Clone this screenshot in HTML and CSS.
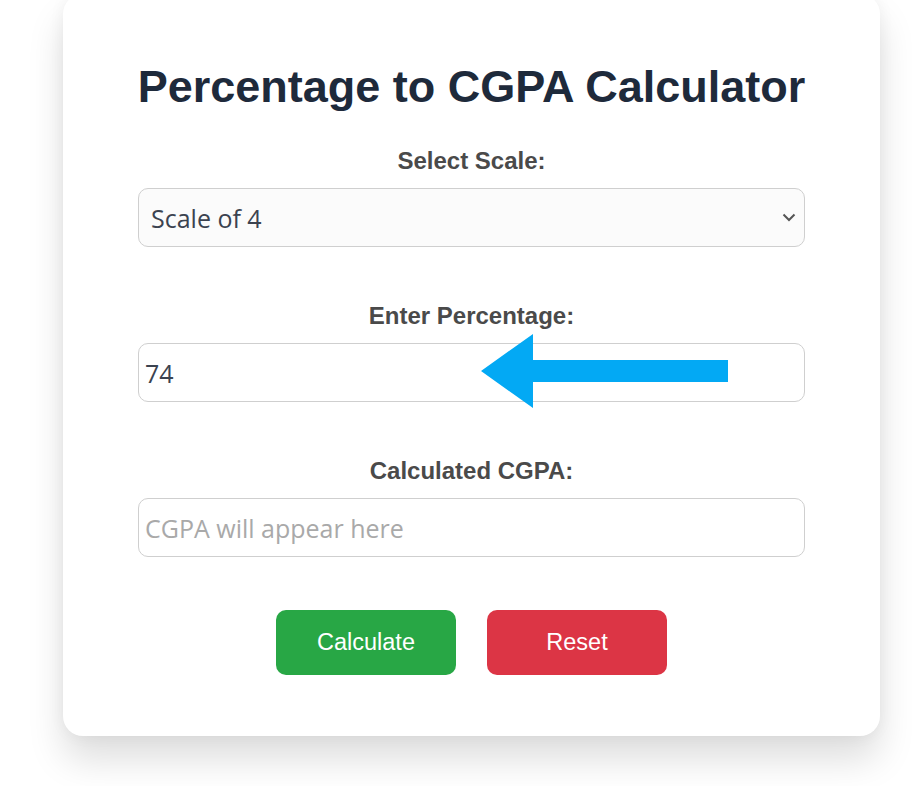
FILE: index.html
```html
<!DOCTYPE html>
<html lang="en">
<head>
    <meta charset="UTF-8">
    <meta name="viewport" content="width=device-width, initial-scale=1.0">
    <title>Percentage to CGPA Calculator</title>
    <link rel="stylesheet" href="styles.css">
</head>
<body>
    <div class="calculator">
        <h1>Percentage to CGPA Calculator</h1>

        <div class="field">
            <label for="scale">Select Scale:</label>
            <select id="scale" class="control">
                <option value="4" selected>Scale of 4</option>
                <option value="5">Scale of 5</option>
                <option value="10">Scale of 10</option>
            </select>
        </div>

        <div class="field">
            <label for="percentage">Enter Percentage:</label>
            <div class="control-wrap">
                <input type="number" id="percentage" class="control" value="74">
                <svg class="pointer" width="252" height="78" viewBox="0 0 252 78" aria-hidden="true">
                    <polygon points="2,37 54,0 54,26 249,26 249,48 54,48 54,74" fill="#03a9f4"/>
                </svg>
            </div>
        </div>

        <div class="field">
            <label for="result">Calculated CGPA:</label>
            <input type="text" id="result" class="control" placeholder="CGPA will appear here" readonly>
        </div>

        <div class="actions">
            <button class="btn btn-calc" id="calcButton">Calculate</button>
            <button class="btn btn-reset" id="resetButton">Reset</button>
        </div>
    </div>

    <script>
        const scaleSelect = document.getElementById('scale');
        const percentInput = document.getElementById('percentage');
        const resultInput = document.getElementById('result');

        document.getElementById('calcButton').addEventListener('click', () => {
            const pct = parseFloat(percentInput.value);
            if (isNaN(pct)) {
                resultInput.value = '';
                return;
            }
            const scale = parseFloat(scaleSelect.value);
            resultInput.value = (pct / 100 * scale).toFixed(2);
        });

        document.getElementById('resetButton').addEventListener('click', () => {
            percentInput.value = '';
            resultInput.value = '';
            scaleSelect.value = '4';
        });
    </script>
</body>
</html>
```

FILE: styles.css
```css
:root {
    --title: #1e2a3b;
    --label: #4a4a4a;
    --border: #cfcfcf;
    --field-text: #3b4350;
    --green: #28a745;
    --red: #dc3545;
}

body {
    margin: 0;
    padding-bottom: 50px;
    background: #ffffff;
    font-family: 'Liberation Sans', Arial, sans-serif;
}

.calculator {
    box-sizing: border-box;
    width: 817px;
    margin: -6px 0 0 63px;
    padding: 68px 75px 61px;
    background: #ffffff;
    border-radius: 20px;
    box-shadow: 0 24px 36px rgba(0, 0, 0, 0.13), 0 0 16px rgba(0, 0, 0, 0.05);
    text-align: center;
}

.calculator h1 {
    margin: 0 -20px 36px;
    font-size: 45px;
    font-weight: bold;
    line-height: 1.12;
    white-space: nowrap;
    color: var(--title);
}

.field {
    display: flex;
    flex-direction: column;
    gap: 13.5px;
    margin-bottom: 56px;
}

.field label {
    font-size: 24px;
    font-weight: bold;
    line-height: 1.1;
    color: var(--label);
}

.control {
    box-sizing: border-box;
    width: 100%;
    height: 59px;
    margin: 0;
    padding: 0 6px;
    border: 1px solid var(--border);
    border-radius: 10px;
    background: #ffffff;
    font-family: 'Open Sans', sans-serif;
    font-size: 25px;
    color: var(--field-text);
    outline: none;
}

select.control {
    -webkit-appearance: none;
    appearance: none;
    padding-left: 12px;
    background: #fbfbfb url("data:image/svg+xml,%3Csvg xmlns='http://www.w3.org/2000/svg' width='14' height='9' viewBox='0 0 14 9'%3E%3Cpath d='M1.5 1.5 L7 7 L12.5 1.5' fill='none' stroke='%23555' stroke-width='2'/%3E%3C/svg%3E") no-repeat right 8px center;
}

.control::placeholder {
    color: #a9a9a9;
}

input[type=number]::-webkit-inner-spin-button,
input[type=number]::-webkit-outer-spin-button {
    -webkit-appearance: none;
    margin: 0;
}

.control-wrap {
    position: relative;
}

.pointer {
    position: absolute;
    left: 341px;
    top: -9px;
}

.actions {
    display: flex;
    justify-content: center;
    gap: 31px;
    margin-top: -3.5px;
}

.btn {
    width: 180px;
    height: 65px;
    border: none;
    border-radius: 10px;
    font-family: 'Liberation Sans', Arial, sans-serif;
    font-size: 23.5px;
    color: #ffffff;
    cursor: pointer;
}

.btn-calc {
    background: var(--green);
}

.btn-reset {
    background: var(--red);
}
```
